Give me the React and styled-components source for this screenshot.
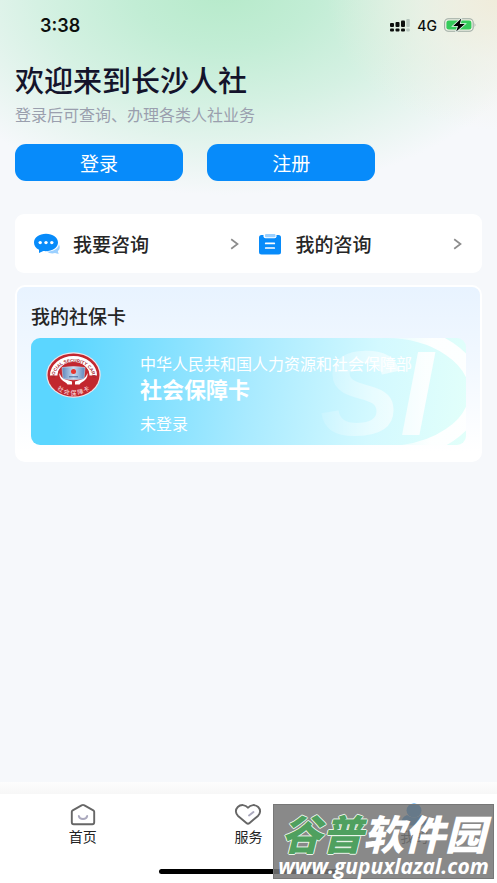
import React from 'react'
import styled, { createGlobalStyle } from 'styled-components'

const GlobalStyle = createGlobalStyle`
  * { box-sizing: border-box; }

  body {
    margin: 0;
    background: #f6f8fb;
    color: #262626;
    font-family: "Noto Sans CJK SC", "Noto Sans", sans-serif;
  }

  button { font-family: inherit; cursor: pointer; }
  h1, h2, p { margin: 0; }
`;

const Page = styled.div`
  position: relative;
  display: flex;
  flex-direction: column;
  min-height: 100vh;

  background:
    radial-gradient(ellipse 170px 130px at 100% 0, #f0ecdb 0%, rgba(242, 240, 228, 0.6) 45%, rgba(246, 248, 251, 0) 100%),
    radial-gradient(ellipse 66% 205px at 45% -10px, #b6eaca 0%, #c2edd5 28%, #d5f1e3 57%, #e9f5f1 82%, #f6f8fb 100%),
    #f6f8fb;
`;

const StatusBar = styled.div`
  display: flex;
  align-items: center;
  justify-content: space-between;
  height: 50px;
  padding: 0 20px 0 40px;

  color: #0c0f0d;
  font-family: Inter, sans-serif;
`;

const Time = styled.span`
  font-size: 18px;
  font-weight: 600;
`;

const Signals = styled.div`
  display: flex;
  align-items: center;
  gap: 7px;

  font-size: 14px;
  font-weight: 500;
`;

const Main = styled.main`
  flex: 1;
  padding: 10px 15px;
`;

const Title = styled.h1`
  color: #14142b;
  font-size: 29px;
  font-weight: 500;
  line-height: 38px;
`;

const Hint = styled.p`
  margin-top: 4px;
  color: #9a9fae;
  font-size: 16px;
  line-height: 24px;
`;

const Actions = styled.div`
  display: grid;
  grid-template-columns: 36% 36%;
  column-gap: 24px;
  margin-top: 18px;
`;

const ActionButton = styled.button`
  height: 37px;
  padding: 0;
  border: 0;
  border-radius: 11px;

  background: #078bfa;
  color: white;
  font-size: 19px;
  line-height: 36px;
`;

const QuickLinks = styled.nav`
  display: grid;
  grid-template-columns: 1fr 1fr;
  margin-top: 33px;
  border-radius: 9px;
  background: white;
`;

const QuickLink = styled.a`
  display: flex;
  align-items: center;
  gap: 13px;
  height: 59px;
  padding: 0 ${({ $last }) => $last ? '20px 0 8px' : '10px 0 18px'};

  color: #262626;
  font-size: 19px;
  font-weight: 500;
  text-decoration: none;

  span { flex: 1; }
`;

const Panel = styled.section`
  margin-top: 12px;
  padding: 16px 14px 15px;
  border: 2px solid white;
  border-radius: 10px;
  background: linear-gradient(180deg, #e8f3ff 0%, #f2f8ff 45%, #ffffff 95%);
`;

const PanelTitle = styled.h2`
  font-size: 19px;
  font-weight: 500;
  line-height: 26px;
`;

const SocialCard = styled.div`
  position: relative;
  display: flex;
  gap: 39px;
  height: 107px;
  margin-top: 9px;
  padding: 14px 0 0 15px;
  border-radius: 9px;
  overflow: hidden;

  background: linear-gradient(97deg, #5bd6ff 8%, #a8eaff 50%, #d3f9ff 78%, #e2fffa 100%);
  color: white;
`;

const CardMark = styled.svg`
  position: absolute;
  top: 0; right: 0;
`;

const CardText = styled.div`
  position: relative;
  display: flex;
  flex-direction: column;
  font-size: 16px;
  line-height: 22px;
  white-space: nowrap;
`;

const CardName = styled.strong`
  font-size: 22px;
  font-weight: 700;
  line-height: 28px;
`;

const CardStatus = styled.span`
  margin-top: 10px;
`;

const TabShade = styled.div`
  height: 12px;
  background: linear-gradient(180deg, #fdfdfd, #f7f7f7);
`;

const TabBar = styled.nav`
  display: grid;
  grid-template-columns: repeat(3, 1fr);
  height: 75px;
  background: white;
`;

const Tab = styled.button`
  display: flex;
  flex-direction: column;
  align-items: center;
  padding: 8px 0 0;
  border: 0;
  background: none;

  color: #222;
  font-size: 14px;
  line-height: 20px;
`;

const HomeArea = styled.div`
  display: flex;
  justify-content: center;
  height: 14px;
  background: white;
`;

const HomeIndicator = styled.div`
  width: 36%; height: 5px;
  border-radius: 3px;
  background: black;
`;

const Watermark = styled.div`
  position: absolute;
  right: 3px; bottom: 4px;
  width: 221px; height: 75px;
  border: 1px solid #777;

  background: rgba(118, 118, 118, 0.86);
  color: white;
  text-align: center;
  white-space: nowrap;
`;

const SiteName = styled.div`
  padding-top: 5px;
  font-size: 41px;
  font-style: italic;
  font-weight: 900;
  line-height: 44px;

  em {
    color: #4fa05f;
    text-shadow: 1px 0 #e9f5e9, -1px 0 #e9f5e9, 0 1px #e9f5e9, 0 -1px #e9f5e9;
  }
`;

const SiteUrl = styled.div`
  font-family: "Open Sans", sans-serif;
  font-size: 21px;
  font-style: italic;
  font-weight: 700;
  line-height: 24px;
`;

const SignalIcon = () => (
  <svg width="20" height="13" viewBox="0 0 20 13" aria-hidden="true">
    <g fill="#0c0f0d">
      <rect x="0" y="4" width="4" height="4" rx="1" />
      <rect x="5.5" y="3" width="4" height="5" rx="1" />
      <rect x="11" y="1.5" width="4" height="6.5" rx="1" />
      <rect x="0" y="9.5" width="4" height="3" rx="1" />
      <rect x="5.5" y="9.5" width="4" height="3" rx="1" />
      <rect x="11" y="9.5" width="4" height="3" rx="1" />
    </g>
    <g fill="#b5c5bd">
      <rect x="16.3" y="0" width="3.5" height="8" rx="1" />
      <rect x="16.3" y="9.5" width="3.5" height="3" rx="1" />
    </g>
  </svg>
);

const BatteryIcon = () => (
  <svg width="33" height="14" viewBox="0 0 33 14" aria-hidden="true">
    <rect x="0.6" y="0.8" width="28.6" height="12.4" rx="3.8" fill="none" stroke="#9daaa3" strokeWidth="1.1" />
    <path d="M30.6 4.8 Q32.4 7 30.6 9.2Z" fill="#9daaa3" />
    <rect x="2.4" y="2.5" width="25" height="9" rx="2.3" fill="#35cb5b" />
    <path d="M17.3 0.5 9.2 8H14L12.2 13.5 20.8 6H15.8Z" fill="#000" stroke="#e8f6ee" strokeWidth="1.6" paintOrder="stroke" />
  </svg>
);

const ChatIcon = () => (
  <svg width="27" height="22" viewBox="0 0 27 22" aria-hidden="true">
    <path d="M26 11.500c1.300 2.600.8 5-1.200 6.800l.9 2.700-3.700-.9c-3 .9-6 .2-8.200-1.600 6 .1 11.200-2.400 12.200-7z" fill="#9bd0ff" />
    <path d="M13 .8C6.300.8 1 4.500 1 9.500c0 3.200 1.800 5.700 5 7.200v3.200l4.300-1.900c8 .9 14.700-3 14.700-8.500C25 4.500 19.700.8 13 .8z" fill="#078bfa" />
    <g fill="#fff">
      <circle cx="7.200" cy="9.600" r="1.700" />
      <circle cx="13" cy="9.600" r="1.700" />
      <circle cx="18.800" cy="9.600" r="1.700" />
    </g>
  </svg>
);

const ClipboardIcon = () => (
  <svg width="26" height="22" viewBox="0 0 26 22" aria-hidden="true">
    <rect x="2" y="2" width="22" height="19.500" rx="2.500" fill="#078bfa" />
    <path d="M6.500 1.500h13v1.800q0 2-2 2h-9q-2 0-2-2z" fill="#fff" />
    <rect x="8" y="1" width="10.500" height="3.200" rx="1" fill="#9bd0ff" />
    <path d="M8.700 10.400h8.600M8.700 15h8.600" stroke="#fff" strokeWidth="1.700" strokeLinecap="round" />
  </svg>
);

const Chevron = () => (
  <svg width="9" height="12" viewBox="0 0 9 12" aria-hidden="true">
    <path d="M1.200 1.200 7.500 6 1.200 10.800" fill="none" stroke="#8c8c8c" strokeWidth="1.700" />
  </svg>
);

const Emblem = () => (
  <svg width="55" height="46" viewBox="0 0 55 46" aria-hidden="true">
    <defs>
      <path id="emblemTop" d="M8.500 25.500A19 15.500 0 1 1 46.500 25.500" />
      <path id="emblemBottom" d="M6.500 27.500A21 15.500 0 0 0 48.500 27.500" />
      <linearGradient id="emblemBlue" x1="0" x2="1">
        <stop offset="0" stopColor="#5c86bd" />
        <stop offset="0.5" stopColor="#c9ddf0" />
        <stop offset="1" stopColor="#5c86bd" />
      </linearGradient>
    </defs>
    <ellipse cx="27.500" cy="23" rx="27.200" ry="22.800" fill="#f2e3e8" />
    <ellipse cx="27.500" cy="23" rx="26" ry="21.600" fill="#c2272f" />
    <path d="M4 23.500a23.500 19.500 0 0 1 47 0h-7.500a15.500 12.500 0 0 0-32 0z" fill="#fff" />
    <ellipse cx="27.500" cy="22.500" rx="15.600" ry="12.500" fill="#c2272f" />
    <path d="M13.500 21c1 2.500 2 4.500 4.500 6l8 2.500v3h-4.500c-1-2-3.500-2.500-5.500-4.500-2-2-3-4.500-2.500-7zM41.500 21c-1 2.500-2 4.500-4.500 6l-8 2.500v3h4.500c1-2 3.500-2.500 5.500-4.500 2-2 3-4.500 2.500-7z" fill="#fff" />
    <path d="M16 15.500q11.500-2 23 0l-1 11.300q-10.500 2-21 0z" fill="url(#emblemBlue)" stroke="#dbe6f2" strokeWidth="0.500" />
    <circle cx="27.500" cy="19.600" r="2.500" fill="#e6352d" />
    <path d="M23 24.800h9" stroke="#44679b" strokeWidth="1" />
    <text fill="#a92630" fontFamily="Liberation Sans, sans-serif" fontSize="4.500" fontWeight="700" textAnchor="middle">
      <textPath href="#emblemTop" startOffset="50%">SOCIAL SECURITY CARD</textPath>
    </text>
    <text fill="#f3cdd0" fontFamily="Noto Sans CJK SC, sans-serif" fontSize="6" fontWeight="500" textAnchor="middle">
      <textPath href="#emblemBottom" startOffset="50%">社 会 保 障 卡</textPath>
    </text>
  </svg>
);

const SiMark = () => (
  <CardMark width="160" height="107" viewBox="0 0 160 107" aria-hidden="true">
    <defs>
      <linearGradient id="markFill" gradientUnits="userSpaceOnUse" x1="10" x2="120" y1="0" y2="0">
        <stop offset="0" stopColor="#fff" stopOpacity="0.1" />
        <stop offset="0.7" stopColor="#fff" stopOpacity="0.6" />
        <stop offset="1" stopColor="#fff" stopOpacity="0.9" />
      </linearGradient>
      <linearGradient id="ringFill" gradientUnits="userSpaceOnUse" x1="60" x2="125" y1="0" y2="0">
        <stop offset="0" stopColor="#fff" stopOpacity="0" />
        <stop offset="1" stopColor="#fff" stopOpacity="0.95" />
      </linearGradient>
    </defs>
    <ellipse cx="79" cy="54" rx="91" ry="61" fill="none" stroke="url(#ringFill)" strokeWidth="14" />
    <text x="14" y="97" fill="url(#markFill)" fontFamily="Liberation Sans, sans-serif" fontSize="120" fontStyle="italic" fontWeight="700">SI</text>
  </CardMark>
);

const HomeIcon = () => (
  <svg width="26" height="24" viewBox="0 0 26 24" aria-hidden="true">
    <path d="M12 3.200 2.700 8.300q-.9.500-.9 1.500v10.500q0 1.900 1.900 1.900h18.600q1.900 0 1.900-1.900V9.800q0-1-.9-1.500L14 3.200q-1-.6-2 0z" fill="none" stroke="#666" strokeWidth="1.900" />
    <path d="M8.800 14c.9 4 7.500 4 8.400 0" fill="none" stroke="#aaa8bd" strokeWidth="1.900" strokeLinecap="round" />
  </svg>
);

const HeartIcon = () => (
  <svg width="28" height="24" viewBox="0 0 28 24" aria-hidden="true">
    <path d="M14 5.800C11.500 2.300 6.500 2.300 3.800 5c-2.800 2.800-2.300 6.500.3 9l8.300 7q1.600 1.400 3.200 0l8.300-7c2.600-2.500 3.100-6.200.3-9-2.700-2.700-7.700-2.700-10.200.8z" fill="none" stroke="#666" strokeWidth="1.900" strokeLinejoin="round" />
    <path d="M15 13.500 19.500 10" stroke="#aaa8bd" strokeWidth="1.900" strokeLinecap="round" />
  </svg>
);

const UserIcon = () => (
  <svg width="28" height="24" viewBox="0 0 28 24" aria-hidden="true">
    <ellipse cx="14" cy="8.500" rx="7.500" ry="7" fill="#078bfa" />
    <path d="M7 13q7 5 14 0 5.500 2 5.500 7.500 0 3-3.500 3H5q-3.500 0-3.500-3Q1.500 15 7 13z" fill="#078bfa" />
  </svg>
);

const tabs = [
  { label: '首页', Icon: HomeIcon },
  { label: '服务', Icon: HeartIcon },
  { label: '我的', Icon: UserIcon },
];

class App extends React.Component {

  render () {
    return (
      <Page>
        <GlobalStyle />
        <StatusBar>
          <Time>3:38</Time>
          <Signals>
            <SignalIcon />
            <span>4G</span>
            <BatteryIcon />
          </Signals>
        </StatusBar>

        <Main>
          <Title>欢迎来到长沙人社</Title>
          <Hint>登录后可查询、办理各类人社业务</Hint>
          <Actions>
            <ActionButton type="button">登录</ActionButton>
            <ActionButton type="button">注册</ActionButton>
          </Actions>

          <QuickLinks>
            <QuickLink href="#ask">
              <ChatIcon />
              <span>我要咨询</span>
              <Chevron />
            </QuickLink>
            <QuickLink href="#mine" $last>
              <ClipboardIcon />
              <span>我的咨询</span>
              <Chevron />
            </QuickLink>
          </QuickLinks>

          <Panel>
            <PanelTitle>我的社保卡</PanelTitle>
            <SocialCard>
              <SiMark />
              <Emblem />
              <CardText>
                <span>中华人民共和国人力资源和社会保障部</span>
                <CardName>社会保障卡</CardName>
                <CardStatus>未登录</CardStatus>
              </CardText>
            </SocialCard>
          </Panel>
        </Main>

        <TabShade />
        <TabBar>
          {tabs.map(({ label, Icon }) => (
            <Tab key={label} type="button">
              <Icon />
              {label}
            </Tab>
          ))}
        </TabBar>
        <HomeArea>
          <HomeIndicator />
        </HomeArea>

        <Watermark>
          <SiteName><em>谷普</em>软件园</SiteName>
          <SiteUrl>www.gupuxlazal.com</SiteUrl>
        </Watermark>
      </Page>
    );
  }

}

export default App;
